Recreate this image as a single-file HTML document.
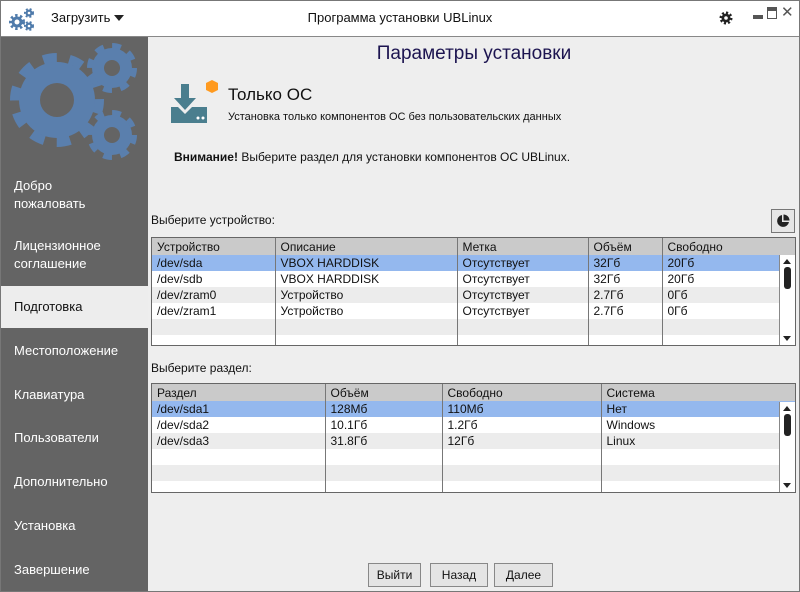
<!DOCTYPE html>
<html><head><meta charset="utf-8"><style>
*{margin:0;padding:0;box-sizing:border-box}
body{width:800px;height:592px;overflow:hidden;background:#eeeeee;font-family:"Liberation Sans","DejaVu Sans",sans-serif;font-size:12px;color:#111;position:relative}
.a{position:absolute;white-space:nowrap}
#frame{position:absolute;left:0;top:0;width:800px;height:592px;border:1px solid #777;pointer-events:none}
#hdr{position:absolute;left:0;top:0;width:800px;height:37px;background:#fff;border-bottom:1px solid #888}
#side{position:absolute;left:0;top:37px;width:148px;height:555px;background:#646464}
.si{position:absolute;left:14px;color:#fff;font-size:13px;line-height:18px}
table{border-collapse:collapse;position:absolute;table-layout:fixed;background:#fff}
td,th{font-weight:normal;text-align:left;padding:0 0 0 5px;height:16px;font-size:12px;line-height:16px;border-left:1px solid #777;overflow:hidden;white-space:nowrap}
th{background:#cacaca;height:17px}
tr.s td{background:#94b8ee}
tr.g td{background:#ececec}
.tb{position:absolute;border:1px solid #666;overflow:hidden;background:#fff}
.sb{position:absolute;width:16px;background:#fff;border-left:1px solid #888}
.btn{position:absolute;top:563px;height:24px;border:1px solid #888;background:#e4e4e4;font-size:12px;line-height:22px;text-align:center}
</style></head><body>
<div id="hdr">
<svg class="a" style="left:8px;top:6px" width="28" height="26" viewBox="0 0 28 26">
<g fill="#4f7bab"><circle cx="9" cy="16" r="6" stroke="#4f7bab" stroke-width="4" stroke-dasharray="2.2 2.2" fill="none"/><circle cx="9" cy="16" r="5.5"/><circle cx="21" cy="7" r="3.5" stroke="#4f7bab" stroke-width="3" stroke-dasharray="1.7 1.7" fill="none"/><circle cx="21" cy="7" r="3.5"/><circle cx="21" cy="20" r="3.5" stroke="#4f7bab" stroke-width="3" stroke-dasharray="1.7 1.7" fill="none"/><circle cx="21" cy="20" r="3.5"/></g>
<g fill="#fff"><circle cx="9" cy="16" r="2.5"/><circle cx="21" cy="7" r="1.3"/><circle cx="21" cy="20" r="1.3"/></g></svg>
<div class="a" style="left:51px;top:10px;font-size:13px">Загрузить</div>
<div class="a" style="left:114px;top:15px;width:0;height:0;border-left:5px solid transparent;border-right:5px solid transparent;border-top:6px solid #222"></div>
<div class="a" style="left:0;width:800px;top:10px;text-align:center;font-size:13px">Программа установки UBLinux</div>
<svg class="a" style="left:719px;top:11px" width="14" height="14" viewBox="0 0 14 14"><circle cx="7" cy="7" r="5" fill="none" stroke="#222" stroke-width="3" stroke-dasharray="2 1.9"/><circle cx="7" cy="7" r="4.5" fill="#222"/><circle cx="7" cy="7" r="1.8" fill="#fff"/></svg>
<div class="a" style="left:753px;top:15px;width:10px;height:4px;background:#555"></div>
<div class="a" style="left:767px;top:7px;width:10px;height:12px;border:1px solid #555;border-top:4px solid #555"></div>
<div class="a" style="left:781px;top:3px;font-size:15px;color:#555">✕</div>
</div>
<div id="side">
<svg class="a" style="left:0;top:0" width="148" height="130" viewBox="0 37 148 130">
<g fill="#5a7fad">
<circle cx="57" cy="100" r="40" stroke="#5a7fad" stroke-width="14" stroke-dasharray="13 12" fill="none"/><circle cx="57" cy="100" r="38"/>
<circle cx="112" cy="68" r="20" stroke="#5a7fad" stroke-width="10" stroke-dasharray="8 7.7" fill="none"/><circle cx="112" cy="68" r="20"/>
<circle cx="112" cy="135" r="20" stroke="#5a7fad" stroke-width="10" stroke-dasharray="8 7.7" fill="none"/><circle cx="112" cy="135" r="20"/>
</g>
<g fill="#646464"><circle cx="57" cy="100" r="17"/><circle cx="112" cy="68" r="8"/><circle cx="112" cy="135" r="8"/></g>
</svg>
<div class="si" style="top:140px">Добро<br>пожаловать</div>
<div class="si" style="top:200px">Лицензионное<br>соглашение</div>
<div class="a" style="left:0;top:249px;width:148px;height:42px;background:#ededed"></div>
<div class="si" style="top:261px;color:#111">Подготовка</div>
<div class="si" style="top:305px">Местоположение</div>
<div class="si" style="top:349px">Клавиатура</div>
<div class="si" style="top:392px">Пользователи</div>
<div class="si" style="top:436px">Дополнительно</div>
<div class="si" style="top:480px">Установка</div>
<div class="si" style="top:524px">Завершение</div>
</div>
<div class="a" style="left:148px;width:652px;top:43px;text-align:center;font-size:19px;color:#1c1450">Параметры установки</div>
<svg class="a" style="left:170px;top:80px" width="52" height="46" viewBox="0 0 52 46">
<path d="M11 4h8v14h7L15 30 4 18h7z" fill="#4a7e8e"/>
<path d="M1 27h7l7 7 7-7h15v16H1z" fill="#4a7e8e"/>
<circle cx="28" cy="38" r="1.5" fill="#fff"/><circle cx="33" cy="38" r="1.5" fill="#fff"/>
<polygon points="42,0 48,3 48,10 42,13 36,10 36,3" fill="#ff9a1f"/>
</svg>
<div class="a" style="left:228px;top:85px;font-size:17px">Только ОС</div>
<div class="a" style="left:228px;top:111px;font-size:11px">Установка только компонентов ОС без пользовательских данных</div>
<div class="a" style="left:174px;top:150px;font-size:12px"><b>Внимание!</b> Выберите раздел для установки компонентов ОС UBLinux.</div>
<div class="a" style="left:151px;top:213px">Выберите устройство:</div>
<div class="a" style="left:771px;top:209px;width:24px;height:24px;border:1px solid #777;background:#e6e6e6"></div>
<svg class="a" style="left:776px;top:214px" width="14" height="14" viewBox="0 0 14 14"><path d="M6 1A6 6 0 1 0 13 8H6z" fill="#222"/><path d="M7.5 0.5A6 6 0 0 1 13.5 6.5H7.5z" fill="#222"/></svg>
<div class="tb" style="left:151px;top:237px;width:645px;height:109px">
<table style="left:0;top:0;width:643px">
<colgroup><col style="width:123px"><col style="width:182px"><col style="width:131px"><col style="width:74px"><col style="width:133px"></colgroup>
<tr><th style="border-left:0">Устройство</th><th>Описание</th><th>Метка</th><th>Объём</th><th>Свободно</th></tr>
<tr class="s"><td style="border-left:0">/dev/sda</td><td>VBOX HARDDISK</td><td>Отсутствует</td><td>32Гб</td><td>20Гб</td></tr>
<tr><td style="border-left:0">/dev/sdb</td><td>VBOX HARDDISK</td><td>Отсутствует</td><td>32Гб</td><td>20Гб</td></tr>
<tr class="g"><td style="border-left:0">/dev/zram0</td><td>Устройство</td><td>Отсутствует</td><td>2.7Гб</td><td>0Гб</td></tr>
<tr><td style="border-left:0">/dev/zram1</td><td>Устройство</td><td>Отсутствует</td><td>2.7Гб</td><td>0Гб</td></tr>
<tr class="g"><td style="border-left:0"></td><td></td><td></td><td></td><td></td></tr>
<tr><td style="border-left:0"></td><td></td><td></td><td></td><td></td></tr>
</table>
<div class="sb" style="left:627px;top:17px;height:91px"><div class="a" style="left:3px;top:4px;border-left:4px solid transparent;border-right:4px solid transparent;border-bottom:5px solid #222"></div><div class="a" style="left:4px;top:12px;width:7px;height:22px;border-radius:3px;background:#222"></div><div class="a" style="left:3px;top:81px;border-left:4px solid transparent;border-right:4px solid transparent;border-top:5px solid #222"></div></div>
</div>
<div class="a" style="left:151px;top:361px">Выберите раздел:</div>
<div class="tb" style="left:151px;top:383px;width:645px;height:110px">
<table style="left:0;top:0;width:643px">
<colgroup><col style="width:173px"><col style="width:117px"><col style="width:159px"><col style="width:194px"></colgroup>
<tr><th style="border-left:0">Раздел</th><th>Объём</th><th>Свободно</th><th>Система</th></tr>
<tr class="s"><td style="border-left:0">/dev/sda1</td><td>128Мб</td><td>110Мб</td><td>Нет</td></tr>
<tr><td style="border-left:0">/dev/sda2</td><td>10.1Гб</td><td>1.2Гб</td><td>Windows</td></tr>
<tr class="g"><td style="border-left:0">/dev/sda3</td><td>31.8Гб</td><td>12Гб</td><td>Linux</td></tr>
<tr><td style="border-left:0"></td><td></td><td></td><td></td></tr>
<tr class="g"><td style="border-left:0"></td><td></td><td></td><td></td></tr>
<tr><td style="border-left:0"></td><td></td><td></td><td></td></tr>
</table>
<div class="sb" style="left:627px;top:18px;height:91px"><div class="a" style="left:3px;top:4px;border-left:4px solid transparent;border-right:4px solid transparent;border-bottom:5px solid #222"></div><div class="a" style="left:4px;top:12px;width:7px;height:22px;border-radius:3px;background:#222"></div><div class="a" style="left:3px;top:81px;border-left:4px solid transparent;border-right:4px solid transparent;border-top:5px solid #222"></div></div>
</div>
<div class="btn" style="left:368px;width:53px">Выйти</div>
<div class="btn" style="left:430px;width:58px">Назад</div>
<div class="btn" style="left:494px;width:59px">Далее</div>
<div id="frame"></div>
</body></html>
